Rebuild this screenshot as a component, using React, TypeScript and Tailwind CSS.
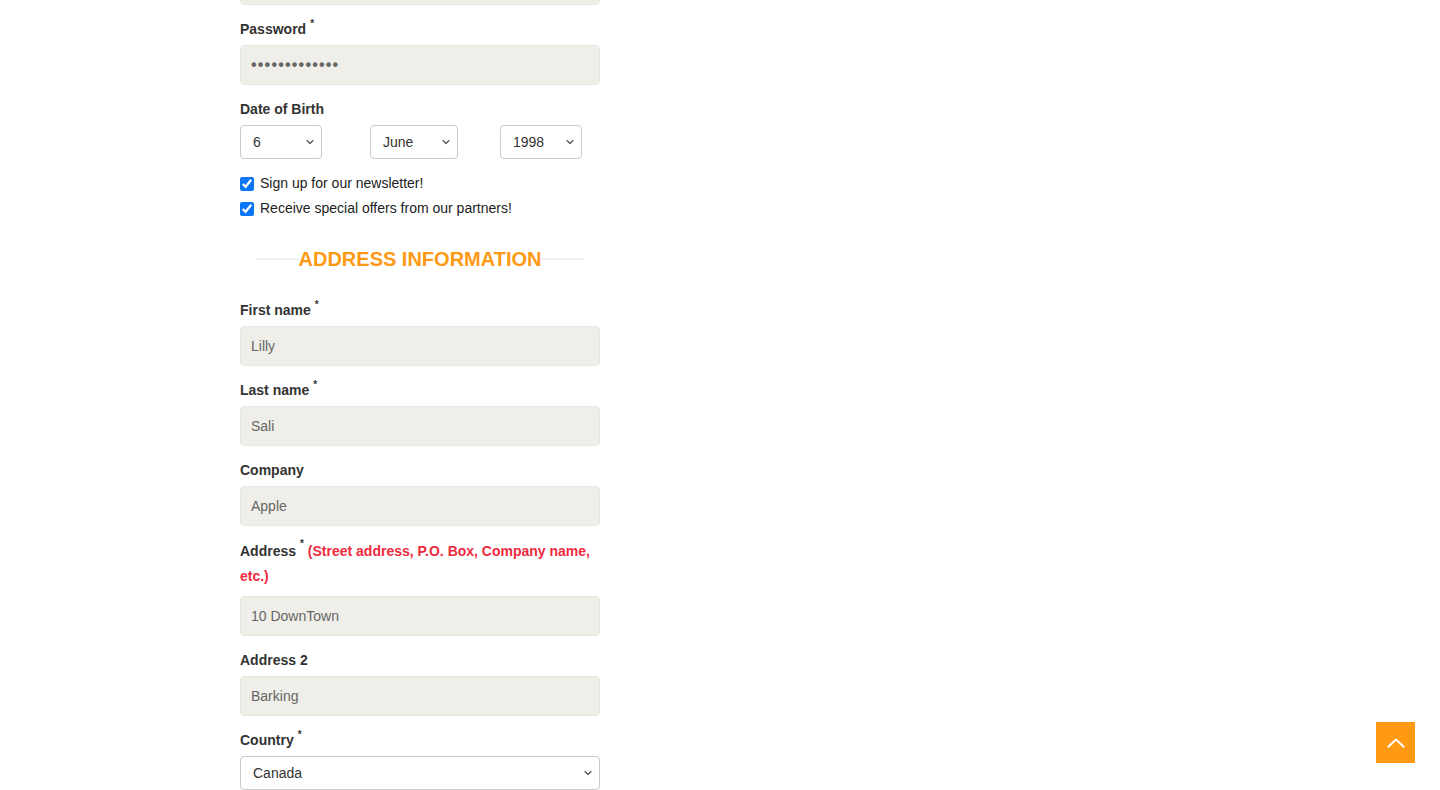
import React from 'react';

const font = { fontFamily: '"Liberation Sans", Arial, Helvetica, sans-serif' };

const Req = () => (
  <span className="inline-block align-top text-[10px] leading-[10px] font-bold ml-[4px]">*</span>
);

const Label = ({ children, required }: { children: React.ReactNode; required?: boolean }) => (
  <label className="block text-[14px] leading-[20px] font-bold text-[#333] mt-[14px] mb-[6px]">
    {children}
    {required && <Req />}
  </label>
);

const TextInput = ({ value, dots }: { value: string; dots?: boolean }) => (
  <input
    type="text"
    defaultValue={value}
    readOnly
    className={`block w-full h-10 px-[10px] rounded-[4px] border border-[#e7e6e0] bg-[#efeee8] text-[#666] outline-none ${dots ? 'text-[16px] tracking-[1.2px] font-bold' : 'text-[14px]'}`}
    style={font}
  />
);

const Chevron = () => (
  <svg className="absolute right-[8px] top-1/2 -translate-y-1/2 pointer-events-none" width="8" height="5" viewBox="0 0 8 5" fill="none">
    <path d="M1 1l3 3 3-3" stroke="#555" strokeWidth="1.2" strokeLinecap="round" strokeLinejoin="round" />
  </svg>
);

const Select = ({ value, className }: { value: string; className: string }) => (
  <div className={`relative ${className}`}>
    <select
      defaultValue={value}
      className="block w-full h-[34px] appearance-none pl-[12px] pr-6 rounded-[4px] border border-[#cbcbcb] bg-white text-[14px] text-[#333] outline-none"
      style={font}
    >
      <option>{value}</option>
    </select>
    <Chevron />
  </div>
);

const Check = ({ label }: { label: string }) => (
  <div className="flex items-center h-[25px] text-[14px] text-[#222]">
    <input type="checkbox" defaultChecked className="m-0 mr-[6px] w-[14px] h-[14px] accent-[#0a76f5]" />
    <span>{label}</span>
  </div>
);

export default function App() {
  return (
    <div className="min-h-screen bg-white overflow-hidden" style={font}>
      <div className="ml-[240px] w-[360px]">
        {/* tail of the field above */}
        <div className="-mt-[35px]">
          <TextInput value="" />
        </div>

        <Label required>Password</Label>
        <TextInput dots value={'\u2022'.repeat(13)} />

        <Label>Date of Birth</Label>
        <div className="flex">
          <Select value="6" className="w-[82px]" />
          <Select value="June" className="w-[88px] ml-[48px]" />
          <Select value="1998" className="w-[82px] ml-[42px]" />
        </div>

        <div className="mt-[12px]">
          <Check label="Sign up for our newsletter!" />
          <Check label="Receive special offers from our partners!" />
        </div>

        <div className="flex items-center mx-[15px] mt-[24px] mb-[27px]">
          <div className="flex-1 h-[2px] bg-[#f1f1ef]" />
          <h2 className="text-[20px] leading-[28px] font-bold uppercase text-[#fd9a15]">Address information</h2>
          <div className="flex-1 h-[2px] bg-[#f1f1ef]" />
        </div>

        <Label required>First name</Label>
        <TextInput value="Lilly" />

        <Label required>Last name</Label>
        <TextInput value="Sali" />

        <Label>Company</Label>
        <TextInput value="Apple" />

        <label className="block text-[14px] leading-[25px] font-bold text-[#333] mt-[13px] mb-[7px]">
          Address
          <Req />{' '}
          <span className="text-[#ee2a3e]">(Street address, P.O. Box, Company name, etc.)</span>
        </label>
        <TextInput value="10 DownTown" />

        <Label>Address 2</Label>
        <TextInput value="Barking" />

        <Label required>Country</Label>
        <Select value="Canada" className="w-full" />
      </div>

      <button className="fixed right-[25px] bottom-[27px] w-[39px] h-[41px] bg-[#ff9a12] flex items-center justify-center">
        <svg width="18" height="10" viewBox="0 0 18 10" fill="none">
          <path d="M1.5 8.5L9 1.5l7.5 7" stroke="white" strokeWidth="2" strokeLinecap="square" />
        </svg>
      </button>
    </div>
  );
}
